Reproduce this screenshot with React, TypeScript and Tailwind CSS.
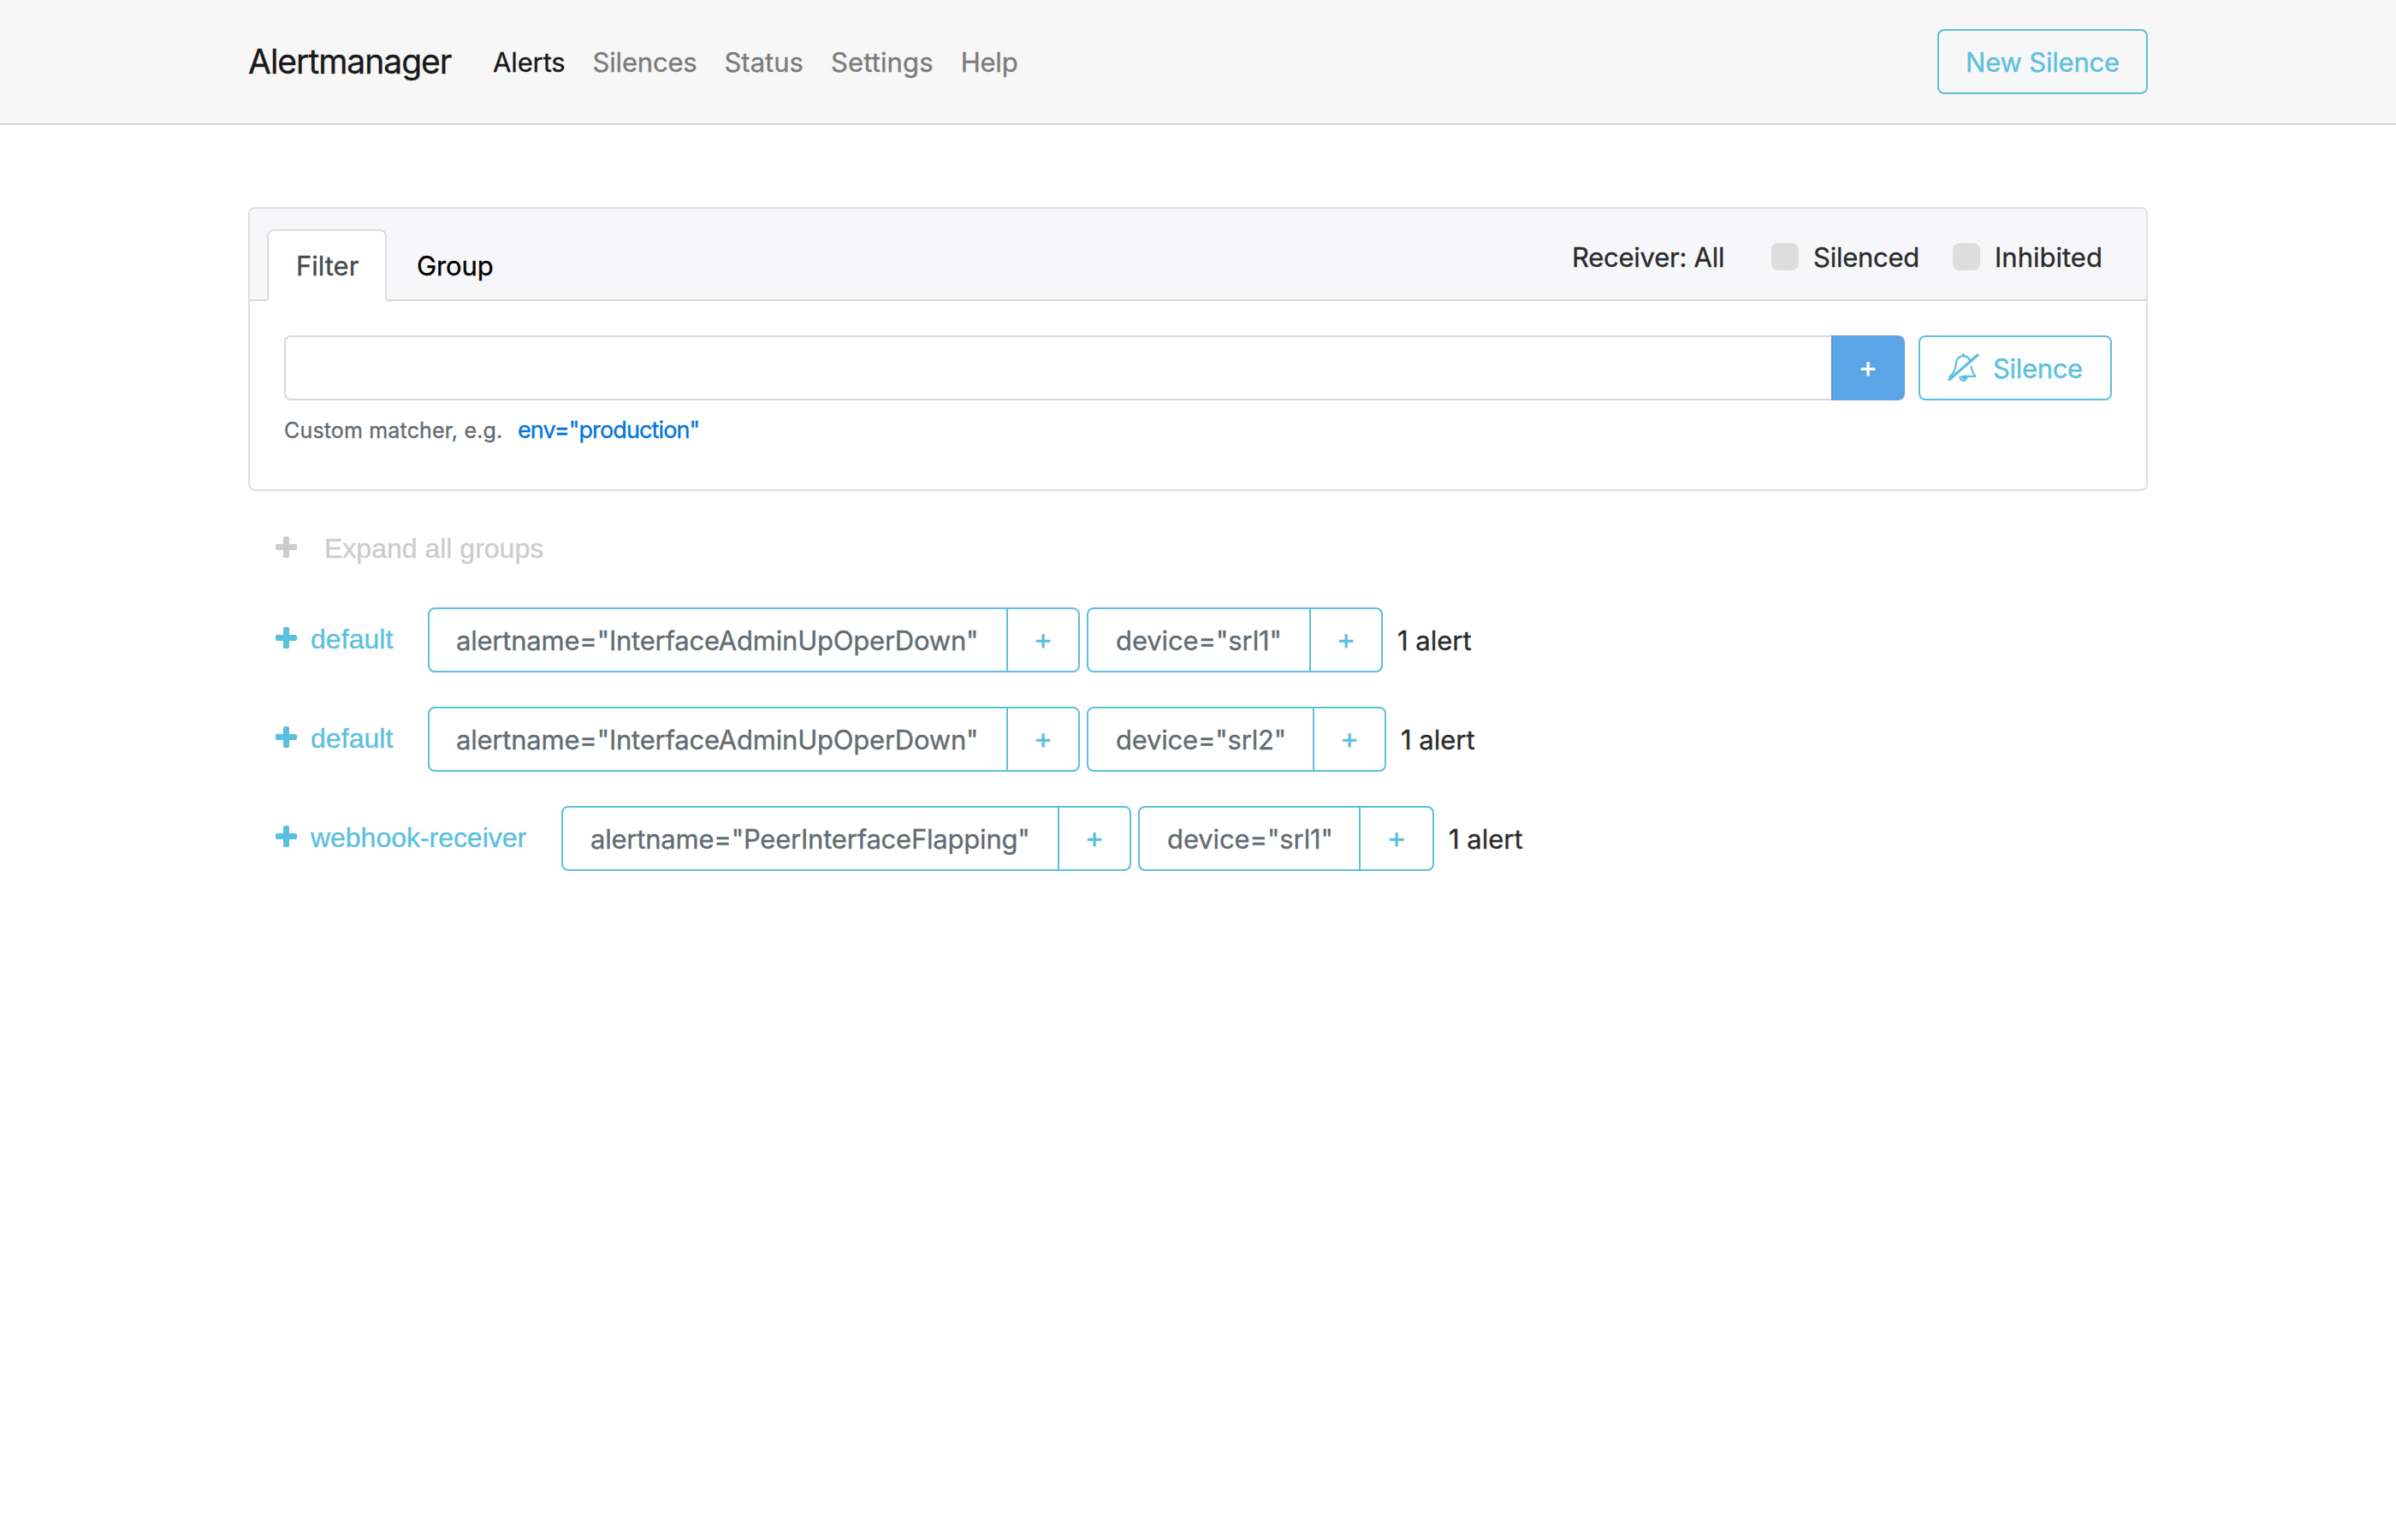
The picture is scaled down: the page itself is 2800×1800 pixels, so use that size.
import React from 'react';

type Chip = { label: string; width: string; split: string; tracking: string };
type Group = { receiver: string; lead: string; tracking: string; chips: Chip[] };

const groups: Group[] = [
  {
    receiver: 'default',
    lead: 'w-[178px]',
    tracking: 'tracking-[0.05px]',
    chips: [
      { label: 'alertname="InterfaceAdminUpOperDown"', width: 'w-[762px]', split: 'w-[676px] pl-[31px]', tracking: 'tracking-[-0.21px]' },
      { label: 'device="srl1"', width: 'w-[346px]', split: 'w-[260px] pl-8', tracking: 'tracking-[-0.1px]' },
    ],
  },
  {
    receiver: 'default',
    lead: 'w-[178px]',
    tracking: 'tracking-[0.05px]',
    chips: [
      { label: 'alertname="InterfaceAdminUpOperDown"', width: 'w-[762px]', split: 'w-[676px] pl-[31px]', tracking: 'tracking-[-0.21px]' },
      { label: 'device="srl2"', width: 'w-[350px]', split: 'w-[264px] pl-8', tracking: 'tracking-[-0.2px]' },
    ],
  },
  {
    receiver: 'webhook-receiver',
    lead: 'w-[334px]',
    tracking: 'tracking-[-0.03px]',
    chips: [
      { label: 'alertname="PeerInterfaceFlapping"', width: 'w-[666px]', split: 'w-[580px] pl-8', tracking: 'tracking-[-0.21px]' },
      { label: 'device="srl1"', width: 'w-[346px]', split: 'w-[258px] pl-8', tracking: 'tracking-[-0.1px]' },
    ],
  },
];

const navItems = [
  { label: 'Alerts', cls: 'text-[#191919] tracking-[-0.12px]' },
  { label: 'Silences', cls: 'text-[#7b7b7b] tracking-[-0.2px]' },
  { label: 'Status', cls: 'text-[#7b7b7b] tracking-[0.02px]' },
  { label: 'Settings', cls: 'text-[#7b7b7b] tracking-[0.12px]' },
  { label: 'Help', cls: 'text-[#7b7b7b] tracking-[-0.21px]' },
];

function PlusIcon() {
  return (
    <svg className="mb-[3px] h-[25px] w-[25px] shrink-0" viewBox="0 0 25 25" fill="currentColor">
      <rect x="0" y="9" width="25" height="7" rx="1.8" />
      <rect x="9" y="0" width="7" height="25" rx="1.8" />
    </svg>
  );
}

function BellSlashIcon() {
  return (
    <svg className="h-[34px] w-[38px] shrink-0" viewBox="0 0 38 34" fill="none" stroke="currentColor" strokeLinecap="round" strokeLinejoin="round">
      <path d="M2 30.8 35 2" strokeWidth="3.2" />
      <path d="M18.3 1.5V3" strokeWidth="2.8" />
      <path d="M2.500 27.200C7 23.500 9 19.500 9.600 14c.3-3.600.5-6.200 2.600-8.400C13.900 3.900 16 3.200 18.300 3.200c3.500 0 6.200 1.700 7.500 4.800" strokeWidth="2.200" />
      <path d="M27.800 15.500c.5 4.500 1.500 8 4.700 11.300H17" strokeWidth="2.200" />
      <path d="M14.200 27.500a4.200 4.200 0 0 0 8.400 1z" fill="currentColor" strokeWidth="1.500" />
      <path d="M16.200 28.600a2.400 2.400 0 0 0 1.800 1.900" stroke="#ffffff" strokeWidth="0.900" />
    </svg>
  );
}

function LabelChip({ chip }: { chip: Chip }) {
  return (
    <div className={`flex h-[76px] shrink-0 rounded-lg border-2 border-[#5bc0de] ${chip.width}`}>
      <div className={`shrink-0 whitespace-nowrap border-r-2 border-[#5bc0de] pt-[12.5px] leading-[48px] text-[#636c72] ${chip.split} ${chip.tracking}`}>
        {chip.label}
      </div>
      <div className="flex flex-1 items-center justify-center pb-[2px] text-[34px] leading-[48px] text-[#5bc0de]">+</div>
    </div>
  );
}

export default function App() {
  return (
    <div className="min-h-[1800px] w-[2800px] bg-white font-[Inter,sans-serif] text-[31px] leading-[48px] text-[#292b2c] [-webkit-text-stroke:0.35px_currentColor]">
      <header className="h-[146px] border-b-2 border-[#d5d5d5] bg-[#f7f7f7]">
        <div className="mx-auto flex h-full w-[2220px] items-center">
          <div className="w-[286px] pb-px text-[39px] leading-[60px] tracking-[-1px] text-[#191919]">Alertmanager</div>
          <nav className="flex gap-8 pt-px">
            {navItems.map((n) => (
              <a key={n.label} className={n.cls}>{n.label}</a>
            ))}
          </nav>
          <button className="ml-auto flex h-[76px] w-[246px] items-center justify-center rounded-lg border-2 border-[#5bc0de] pt-px tracking-[-0.2px] text-[#5bc0de]">
            New Silence
          </button>
        </div>
      </header>

      <main className="mx-auto w-[2220px] pt-24">
        <section className="h-[332px] rounded-lg border-2 border-[#dfdfdf]">
          <div className="flex h-[108px] items-end rounded-t-md border-b-2 border-[#d8d8d9] bg-[#f7f7f9] pl-5">
            <div className="-mb-0.5 flex h-[84px] w-[140px] shrink-0 items-center rounded-t-lg border-2 border-b-white border-[#dddddd] bg-white pl-8 pt-px text-[#464a4c]">
              Filter
            </div>
            <div className="-mb-0.5 flex h-[84px] items-center pl-[35px] pt-px tracking-[-0.1px] text-black">Group</div>
            <div className="ml-auto flex h-[112px] w-[672px] items-center self-start">
              <div className="w-[234px] pl-px pt-px tracking-[-0.25px]">Receiver: All</div>
              <label className="flex w-[212px] items-center">
                <span className="h-8 w-8 rounded-lg bg-[#dddddd]" />
                <span className="ml-[17px] pt-px tracking-[-0.25px]">Silenced</span>
              </label>
              <label className="flex items-center">
                <span className="h-8 w-8 rounded-lg bg-[#dddddd]" />
                <span className="ml-[17px] pt-px">Inhibited</span>
              </label>
            </div>
          </div>
          <div className="px-10 pt-10">
            <div className="flex">
              <div className="h-[76px] flex-1 rounded-l-lg border-2 border-r-0 border-[#d9d9d9] bg-white" />
              <button className="flex h-[76px] w-[86px] items-center justify-center rounded-r-lg border-l-2 border-[#4b9bdd] bg-[#5ba5e6] pb-[2px] pr-[2px] text-[34px] text-white">+</button>
              <button className="ml-4 flex h-[76px] w-[226px] items-center rounded-lg border-2 border-[#5bc0de] pl-8 tracking-[-0.33px] text-[#5bc0de]">
                <BellSlashIcon />
                <span className="ml-[15px] pt-px">Silence</span>
              </button>
            </div>
            <div className="mt-[15px] flex items-baseline leading-[40px]">
              <span className="w-[273px] text-[25px] tracking-[0.17px] text-[#636c72]">Custom matcher, e.g.</span>
              <a className="text-[27px] tracking-[-0.88px] text-[#0275d8]">env="production"</a>
            </div>
          </div>
        </section>

        <div className="mt-[43px] flex h-12 items-center pl-8 font-['Liberation_Sans',Arial,sans-serif] text-[32px] text-[#cccccc]">
          <PlusIcon />
          <span className="ml-8">Expand all groups</span>
        </div>

        <div className="mt-[45px] flex flex-col gap-10 pl-8">
          {groups.map((g, i) => (
            <div key={i} className="flex h-[76px] items-center">
              <div className={`flex shrink-0 items-center whitespace-nowrap pb-[2px] font-['Liberation_Sans',Arial,sans-serif] text-[32px] text-[#5bc0de] ${g.lead} ${g.tracking}`}>
                <PlusIcon />
                <span className="ml-4">{g.receiver}</span>
              </div>
              <div className="flex gap-2">
                {g.chips.map((c) => (
                  <LabelChip key={c.label} chip={c} />
                ))}
              </div>
              <div className="ml-[17px] pt-px">1 alert</div>
            </div>
          ))}
        </div>
      </main>
    </div>
  );
}
